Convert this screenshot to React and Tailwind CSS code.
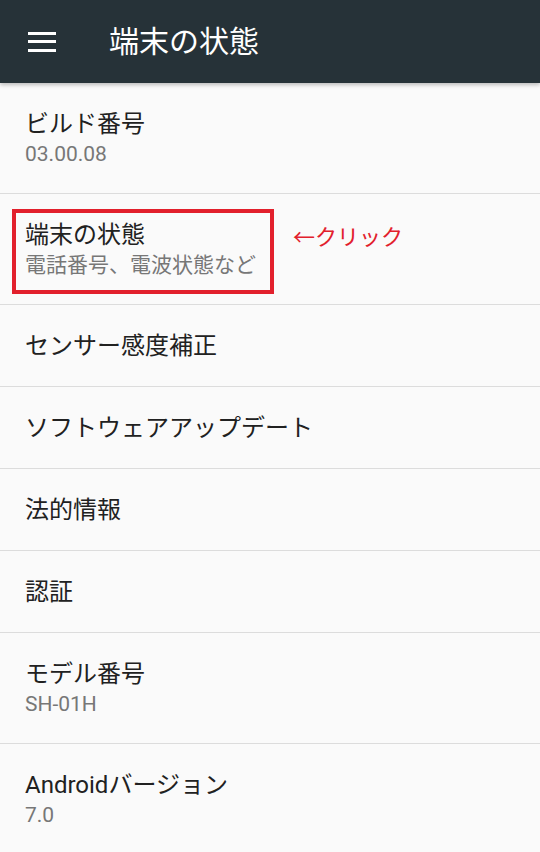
import { useState } from "react";

const ITEMS = [
  { title: "ビルド番号", sub: "03.00.08" },
  { title: "端末の状態", sub: "電話番号、電波状態など", marked: true },
  { title: "センサー感度補正" },
  { title: "ソフトウェアアップデート" },
  { title: "法的情報" },
  { title: "認証" },
  { title: "モデル番号", sub: "SH-01H" },
  { title: "Androidバージョン", sub: "7.0" },
];

function Row({ title, sub, marked }) {
  return (
    <div
      className={`relative flex flex-col justify-center pl-[25px] border-b border-[#dcdcdc] ${
        sub ? "h-[111px]" : "h-[82px]"
      }`}
    >
      <div className="text-[24px] leading-[32px] text-[#212121]">{title}</div>
      {sub && (
        <div className="text-[21px] leading-[29px] text-[#777777]">{sub}</div>
      )}

      {/* 注釈（赤枠） */}
      {marked && (
        <>
          <div className="absolute left-[12px] top-[15px] w-[262px] h-[85px] border-4 border-[#e2202c]" />
          <div className="absolute left-[293px] top-[30px] text-[22px] leading-[28px] text-[#e2202c]">
            ←クリック
          </div>
        </>
      )}
    </div>
  );
}

export default function App() {
  const [open, setOpen] = useState(false);

  return (
    <div className="w-[540px] h-[852px] overflow-hidden bg-[#fafafa] font-['Roboto','Noto_Sans_CJK_JP',sans-serif]">
      <header className="relative z-10 h-[83px] bg-[#263238] flex items-center shadow-[0_2px_4px_rgba(0,0,0,0.25)]">
        <button
          type="button"
          aria-label="メニュー"
          onClick={() => setOpen(!open)}
          className="ml-[28px] w-[28px] flex flex-col gap-[5.5px]"
        >
          <span className="block h-[3px] bg-white" />
          <span className="block h-[3px] bg-white" />
          <span className="block h-[3px] bg-white" />
        </button>
        <h1 className="ml-[53px] text-[30px] leading-none text-white">端末の状態</h1>
      </header>

      <div>
        {ITEMS.map((item, i) => (
          <Row key={item.title} {...item} first={i === 0} />
        ))}
      </div>
    </div>
  );
}
